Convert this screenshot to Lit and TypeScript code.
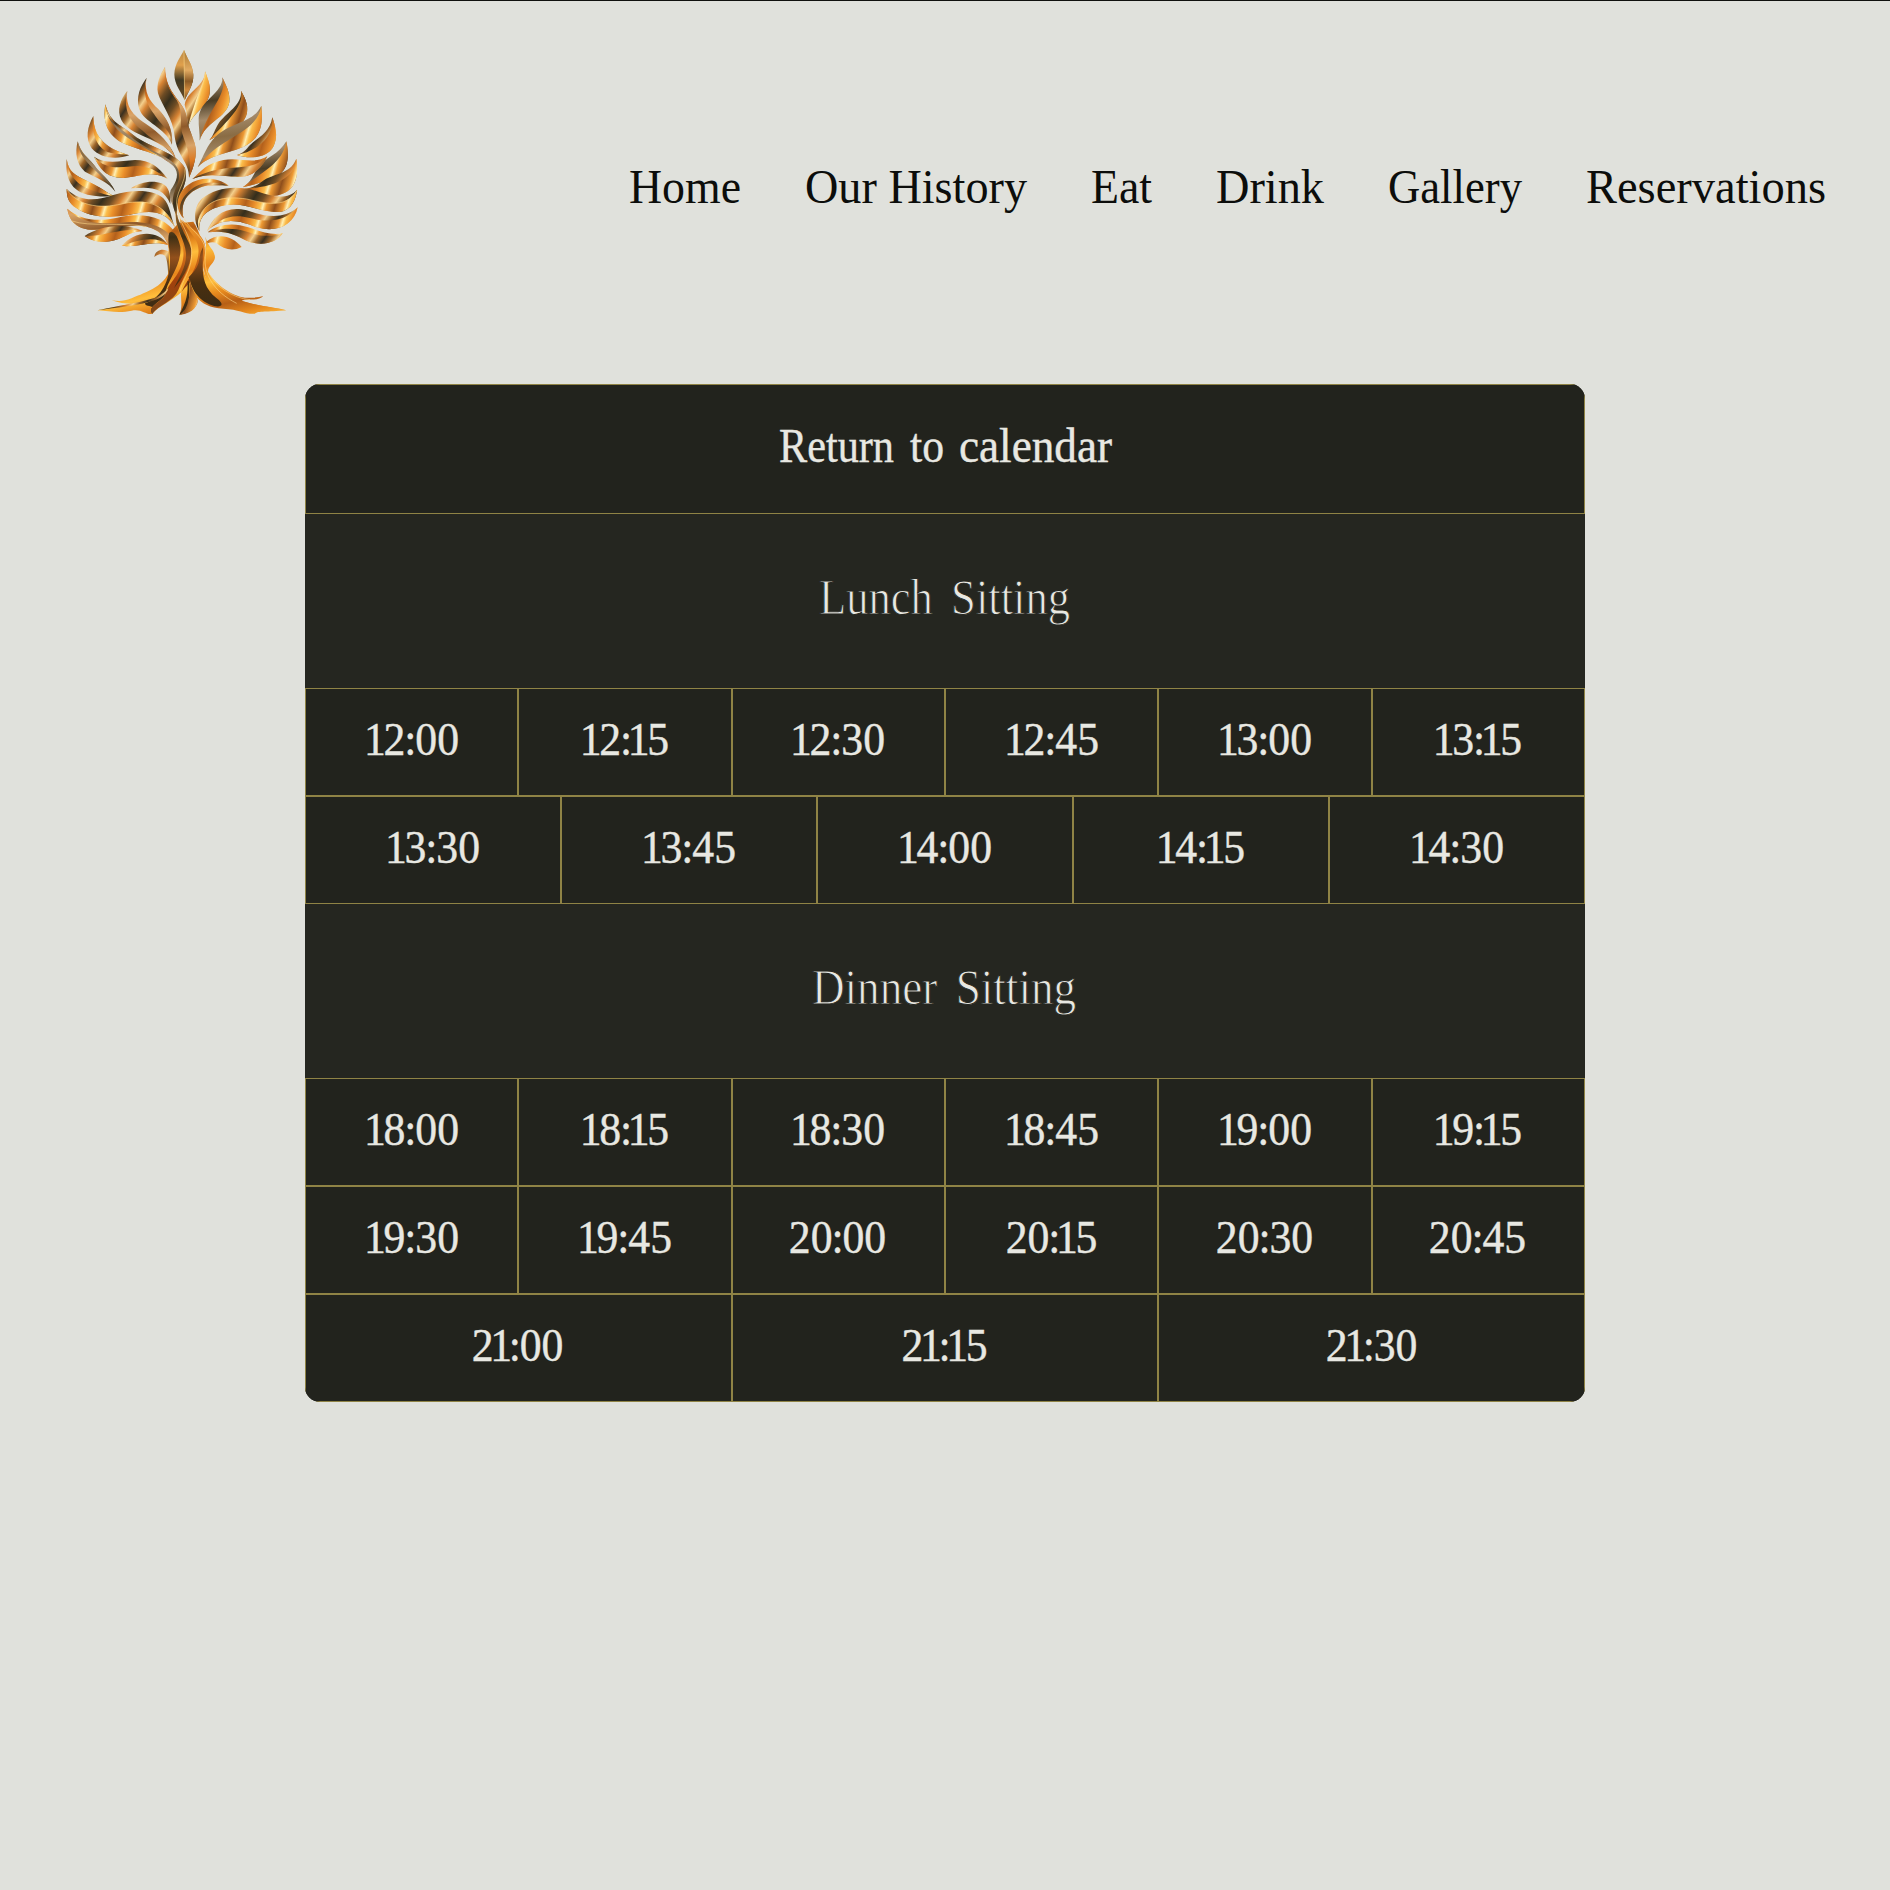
import { LitElement, html, svg, css } from "lit";
import { customElement, property } from "lit/decorators.js";

/** Each leaf, branch or root of the emblem: [gradient name, outline]. */
const TREE: [string, string][] = [
  // crown
  ["d", "M402 30C392 52 374 70 373 103C373 135 394 155 404 181C414 155 431 136 430 104C428 73 411 56 402 30Z"],
  ["a", "M402 30L404 181C414 155 431 136 430 104C428 73 411 56 402 30Z"],
  ["b", "M345 80C330 105 318 130 324 160C334 195 370 235 374 290C382 350 418 365 417 413C430 385 444 345 434 310C424 275 412 260 411 234C404 180 345 165 345 80Z"],
  ["h", "M345 80C340 125 362 155 380 180C402 215 385 255 400 290C412 325 425 350 417 413C430 385 444 345 434 310C424 275 412 260 411 234C404 180 345 165 345 80Z"],
  ["b", "M465 94C466 140 412 150 404 194C410 215 412 240 414 262C428 215 472 205 479 160C482 133 473 115 465 94Z"],
  ["c", "M465 94C462 135 432 180 414 262C428 215 472 205 479 160C482 133 473 115 465 94Z"],
  ["t", "M517 112C520 160 448 180 446 235C445 260 450 280 449 302C465 245 530 235 538 187C541 158 528 136 517 112Z"],
  ["c", "M517 112C535 165 470 210 449 302C465 245 530 235 538 187C541 158 528 136 517 112Z"],
  ["b", "M573 152C578 195 525 220 506 250C494 268 492 285 478 301C520 272 580 270 591 218C595 190 584 173 573 152Z"],
  ["c", "M573 152C586 205 510 260 478 301C520 272 580 270 591 218C595 190 584 173 573 152Z"],
  ["t", "M634 197C610 250 540 245 495 292C472 315 462 345 443 382C500 320 622 352 635 245C637 226 635 213 634 197Z"],
  ["c", "M634 197C620 285 510 285 443 382C500 320 622 352 635 245C637 226 635 213 634 197Z"],
  ["b", "M667 232C660 280 620 295 600 315C588 328 580 340 561 345C590 355 650 360 671 318C685 288 676 258 667 232Z"],
  ["c", "M667 232C672 295 615 335 561 345C590 355 650 360 671 318C685 288 676 258 667 232Z"],
  ["t", "M709 304C685 345 650 350 625 380C610 405 600 430 578 442C625 428 690 422 708 378C718 350 713 325 709 304Z"],
  ["c", "M709 304C700 370 630 400 578 442C625 428 690 422 708 378C718 350 713 325 709 304Z"],
  ["b", "M739 356C720 405 670 398 635 425C618 438 600 446 583 447C625 465 690 485 727 440C745 414 742 382 739 356Z"],
  ["c", "M739 356C730 430 650 440 583 447C625 465 690 485 727 440C745 414 742 382 739 356Z"],
  ["c", "M652 349C610 375 570 350 520 360C470 370 455 392 427 417C490 392 540 418 590 408C620 400 640 375 652 349Z"],
  ["b", "M652 349C600 405 530 360 427 417C490 392 540 418 590 408C620 400 640 375 652 349Z"],
  // crown, left side
  ["b", "M290 113C270 140 258 170 267 205C282 250 345 260 366 314C370 275 356 245 330 215C300 188 275 165 290 113Z"],
  ["h", "M290 113C280 155 300 185 325 207C350 235 370 265 366 314C365 270 335 260 312 222C292 194 276 165 290 113Z"],
  ["b", "M232 152C210 180 200 210 214 240C240 290 330 290 377 354C362 310 330 290 295 268C260 245 215 215 232 152Z"],
  ["h", "M232 152C225 200 250 225 285 250C330 280 360 310 377 354C345 310 310 305 278 272C245 245 218 220 232 152Z"],
  ["t", "M166 193C158 245 170 285 220 310C275 335 335 340 370 378C390 400 380 425 362 450C352 480 375 500 382 530C372 470 420 440 405 385C380 335 300 325 250 285C215 255 180 250 166 193Z"],
  ["b", "M166 193C170 250 215 265 255 300C300 335 370 350 385 390C395 430 365 450 369 490C370 510 378 525 382 530C372 470 420 440 405 385C380 335 300 325 250 285C215 255 180 250 166 193Z"],
  ["c", "M166 193C158 245 170 285 220 310C275 335 335 340 370 378C330 345 290 330 250 304C200 275 172 245 166 193Z"],
  ["b", "M130 228C112 260 105 295 125 325C150 355 200 360 238 346C205 335 175 325 152 297C135 275 130 252 130 228Z"],
  ["c", "M130 228C122 275 140 335 190 340C205 342 220 343 238 346C205 335 175 325 152 297C135 275 130 252 130 228Z"],
  ["b", "M83 304C74 340 80 375 105 395C140 415 175 425 196 455C180 420 150 400 132 375C112 350 92 340 83 304Z"],
  ["t", "M83 304C85 350 125 380 150 405C170 425 185 440 196 455C180 420 150 400 132 375C112 350 92 340 83 304Z"],
  ["b", "M50 357C46 400 55 440 95 458C125 470 160 470 192 469C160 450 140 435 110 422C75 405 55 395 50 357Z"],
  ["c", "M50 357C52 405 85 435 115 446C145 458 165 463 192 469C160 450 140 435 110 422C75 405 55 395 50 357Z"],
  ["b", "M132 350C170 375 210 362 255 360C300 360 325 380 353 416C305 390 270 410 220 414C165 412 150 385 132 350Z"],
  ["c", "M132 350C180 405 240 370 280 380C310 385 330 400 353 416C305 390 270 410 220 414C165 412 150 385 132 350Z"],
  ["b", "M243 445C270 425 310 420 335 430C358 440 362 465 361 492C340 440 300 440 243 445Z"],
  // middle right
  ["c", "M536 437C505 412 450 408 415 434C375 462 375 508 401 535C388 480 420 450 465 438C495 434 515 437 536 437Z"],
  ["b", "M536 437C475 418 445 430 416 455C388 480 382 510 401 535C388 480 420 450 465 438C495 434 515 437 536 437Z"],
  ["b", "M741 449C715 480 665 470 625 455C570 436 500 438 455 477C432 500 428 540 448 574C445 525 475 505 530 495C580 485 640 520 690 516C725 510 738 478 741 449Z"],
  ["c", "M741 449C705 510 640 488 590 477C525 465 475 475 448 530C440 545 445 565 448 574C445 525 475 505 530 495C580 485 640 520 690 516C725 510 738 478 741 449Z"],
  ["b", "M743 502C700 540 645 530 590 511C530 495 490 525 470 575C520 525 575 545 620 562C680 580 732 555 743 502Z"],
  ["c", "M743 502C690 560 630 540 580 530C530 523 500 545 470 575C520 525 575 545 620 562C680 580 732 555 743 502Z"],
  ["c", "M698 580C650 588 615 565 570 556C530 549 495 560 473 577C530 570 555 585 590 602C630 620 680 610 698 580Z"],
  ["b", "M698 580C640 600 600 575 560 568C520 563 500 570 473 577C530 570 555 585 590 602C630 620 680 610 698 580Z"],
  ["c", "M575 621C550 590 505 575 469 605C460 620 480 600 500 610C520 628 548 635 575 621Z"],
  // middle left
  ["b", "M50 447C95 490 145 480 190 465C250 448 310 448 340 475C360 495 362 530 375 562C345 510 300 512 250 522C190 535 120 535 80 505C55 490 50 470 50 447Z"],
  ["c", "M50 447C95 515 180 500 235 488C310 477 345 500 375 562C345 510 300 512 250 522C190 535 120 535 80 505C55 490 50 470 50 447Z"],
  ["c", "M52 506C95 545 155 545 215 530C280 518 350 530 380 585C388 610 390 640 385 675L358 675C365 620 350 575 290 560C220 545 110 600 66 543C58 530 54 520 52 506Z"],
  ["h", "M52 506C95 555 170 553 225 547C300 540 365 565 380 620L385 675L358 675C365 620 350 575 290 560C220 545 110 600 66 543C58 530 54 520 52 506Z"],
  ["b", "M104 588C145 560 220 545 278 573C235 575 220 598 180 604C150 608 130 605 104 588Z"],
  ["c", "M104 588C160 590 220 560 278 573C235 575 220 598 180 604C150 608 130 605 104 588Z"],
  ["b", "M215 618C250 575 320 565 355 615C305 600 275 622 215 618Z"],
  ["c", "M215 618C265 600 315 585 355 615C305 600 275 622 215 618Z"],
  // trunk and roots
  ["b", "M313 651C315 630 340 622 360 637C375 655 368 680 364 700C348 720 360 675 345 647C334 640 325 642 313 651Z"],
  ["g", "M364 675C350 740 290 755 245 775C220 785 205 784 185 781C215 792 250 795 290 788C350 775 400 730 400 690Z"],
  ["g", "M142 811C205 798 280 790 330 758C370 730 350 640 358 580L385 550L430 545C460 590 465 650 460 690C470 745 540 775 600 790C640 800 680 802 709 811C650 817 625 812 615 821C590 825 570 808 520 806C480 805 455 790 440 772C455 800 410 824 388 824C400 800 390 770 394 757C370 780 325 800 307 821C290 827 275 805 245 812C210 820 180 814 142 811Z"],
  ["k", "M358 578C372 570 384 590 391 620C396 680 350 720 345 765C335 785 290 800 307 821C322 790 285 805 285 790C335 775 360 720 360 660C361 630 350 600 358 578Z"],
  ["e", "M378 510C370 565 405 590 400 650C395 705 355 725 345 765C335 785 290 800 307 821C325 795 370 785 385 750C400 710 425 680 424 630C425 590 385 565 378 510Z"],
  ["k", "M378 510C372 565 405 595 408 640C410 680 388 710 372 745C395 715 425 680 424 630C425 590 385 565 378 510Z"],
  ["g", "M390 535C390 580 432 610 426 655C420 700 395 720 388 760C405 725 460 690 465 635C469 575 410 570 390 535Z"],
  ["e", "M395 538C425 590 455 600 443 655C434 700 410 720 395 755C420 725 465 690 467 630C466 580 420 568 395 538Z"],
  ["k", "M416 712C460 670 440 655 459 622C458 690 450 735 500 775C540 805 490 810 450 775C430 755 425 740 416 712Z"],
  ["k", "M412 724C415 760 410 785 388 824C410 824 420 800 418 724Z"],
  ["c", "M420 720C420 765 418 805 390 824C430 820 448 795 440 770C428 750 424 740 420 720Z"],
  ["g", "M466 590C476 625 492 625 495 652C494 670 475 675 474 695C500 740 560 775 595 773C615 773 628 772 640 768C625 785 590 775 575 782C610 794 650 799 709 811C650 810 595 802 550 790C505 775 466 735 462 690C455 650 475 630 466 590Z"],
  ["b", "M142 811C205 798 260 790 310 775C330 770 345 755 355 745C345 785 270 795 142 811Z"],
];

/** Fine light lines that run along the edges of trunk and leaves. */
const GLINTS: string[] = [
  "M402 32L404 180",
  "M405 385C410 430 370 460 382 505C390 560 430 590 425 650C420 700 396 720 390 755",
  "M402 535C432 585 470 590 466 650C460 700 490 755 560 790",
  "M474 695C495 740 550 775 600 779",
  "M50 449C100 515 180 500 235 488C300 480 345 495 374 560",
  "M66 543C120 562 215 545 290 560",
  "M741 451C705 510 640 488 590 477C520 467 470 480 448 530",
];

/** Horizontal adjustments around the narrow "1" and ":" of a time. */
function kern(text: string): string {
  return [...text]
    .map((ch, i) => {
      const prev = text[i - 1];
      let dx = 0;
      if (i > 0 && ch === "1") dx -= 3.5;
      if (prev === "1") dx -= 2.5;
      if (i > 0 && ch === ":") dx -= 1.2;
      if (prev === ":") dx -= 1.2;
      return dx;
    })
    .join(" ");
}

@customElement("tree-logo")
export class TreeLogo extends LitElement {
  static styles = css`
    :host { display: block; width: 260px; height: 290px; }
    .tree { display: block; width: 260px; height: 290px; }
  `;

  render() {
    return html`<svg class="tree" viewBox="0 0 780 870" role="img" aria-label="Golden tree">
      <defs>
        <linearGradient id="a" gradientUnits="userSpaceOnUse" x1="0" y1="30" x2="0" y2="181">
          <stop offset="0" stop-color="#a8772f"></stop><stop offset=".4" stop-color="#e2ab62"></stop>
          <stop offset=".62" stop-color="#8b5b26"></stop><stop offset=".8" stop-color="#d18a3c"></stop>
          <stop offset="1" stop-color="#6e4a20"></stop>
        </linearGradient>
        <linearGradient id="d" gradientUnits="userSpaceOnUse" x1="0" y1="30" x2="0" y2="181">
          <stop offset="0" stop-color="#b98a48"></stop><stop offset=".3" stop-color="#e0a04c"></stop>
          <stop offset=".6" stop-color="#3f3822"></stop><stop offset="1" stop-color="#6a4c26"></stop>
        </linearGradient>
        <linearGradient id="b" gradientUnits="userSpaceOnUse" x1="20" y1="10" x2="98" y2="62" spreadMethod="reflect">
          <stop offset="0" stop-color="#352e1c"></stop><stop offset=".25" stop-color="#6e4c24"></stop>
          <stop offset=".5" stop-color="#d88434"></stop><stop offset=".66" stop-color="#f4cf8c"></stop>
          <stop offset=".82" stop-color="#9c6428"></stop><stop offset="1" stop-color="#3a3020"></stop>
        </linearGradient>
        <linearGradient id="c" gradientUnits="userSpaceOnUse" x1="0" y1="0" x2="84" y2="24" spreadMethod="reflect">
          <stop offset="0" stop-color="#b3601c"></stop><stop offset=".3" stop-color="#ea8e2a"></stop>
          <stop offset=".5" stop-color="#fbbd4c"></stop><stop offset=".6" stop-color="#fff0b4"></stop>
          <stop offset=".72" stop-color="#ee9a34"></stop><stop offset="1" stop-color="#8e4e1c"></stop>
        </linearGradient>
        <linearGradient id="t" gradientUnits="userSpaceOnUse" x1="0" y1="20" x2="14" y2="130" spreadMethod="reflect">
          <stop offset="0" stop-color="#4a3c24"></stop><stop offset=".5" stop-color="#a58c6c"></stop>
          <stop offset="1" stop-color="#8a6c44"></stop>
        </linearGradient>
        <linearGradient id="h" gradientUnits="userSpaceOnUse" x1="0" y1="60" x2="22" y2="190" spreadMethod="reflect">
          <stop offset="0" stop-color="#8f5a2a"></stop><stop offset=".45" stop-color="#d9a468"></stop>
          <stop offset=".8" stop-color="#dc7820"></stop><stop offset="1" stop-color="#a85618"></stop>
        </linearGradient>
        <linearGradient id="e" gradientUnits="userSpaceOnUse" x1="0" y1="540" x2="0" y2="820">
          <stop offset="0" stop-color="#f09a2c"></stop><stop offset=".35" stop-color="#d9781c"></stop>
          <stop offset=".65" stop-color="#a3400c"></stop><stop offset="1" stop-color="#7e4a1c"></stop>
        </linearGradient>
        <linearGradient id="g" gradientUnits="userSpaceOnUse" x1="0" y1="540" x2="30" y2="660" spreadMethod="reflect">
          <stop offset="0" stop-color="#e8861c"></stop><stop offset=".4" stop-color="#ffbe3c"></stop>
          <stop offset=".7" stop-color="#e6891e"></stop><stop offset="1" stop-color="#b65f16"></stop>
        </linearGradient>
        <linearGradient id="k" gradientUnits="userSpaceOnUse" x1="0" y1="510" x2="10" y2="820">
          <stop offset="0" stop-color="#a8743a"></stop><stop offset=".3" stop-color="#403014"></stop>
          <stop offset=".5" stop-color="#93501c"></stop><stop offset=".75" stop-color="#4a2f10"></stop>
          <stop offset="1" stop-color="#3c2c14"></stop>
        </linearGradient>
      </defs>
      ${TREE.map(([fill, d]) => svg`<path d=${d} fill=${`url(#${fill})`}></path>`)}
      ${GLINTS.map((d) => svg`<path d=${d} fill="none" stroke="#ffd98a" stroke-width="2.5" opacity=".7"></path>`)}
    </svg>`;
  }
}

@customElement("site-header")
export class SiteHeader extends LitElement {
  static styles = css`
    :host { display: block; }
    .bar {
      display: flex; align-items: center; justify-content: space-between;
      border-top: 1px solid #0f100e; padding: 39px 64px 0 50px;
    }
    .nav { display: flex; gap: 64px; }
    .link { display: block; height: 60px; text-decoration: none; }
    .label { display: block; height: 60px; overflow: visible; fill: #0c0d0b; font: 47.5px "Liberation Serif", serif; }
  `;

  private links: [string, number][] = [
    ["Home", 112], ["Our History", 222], ["Eat", 61], ["Drink", 108], ["Gallery", 134], ["Reservations", 240],
  ];

  render() {
    return html`<header class="bar">
      <tree-logo></tree-logo>
      <nav class="nav">
        ${this.links.map(
          ([name, w]) => html`<a class="link" href="#"><svg class="label" width=${w} height="60">
            <text x="0" y="48" textLength=${w} lengthAdjust="spacingAndGlyphs">${name}</text></svg></a>`,
        )}
      </nav>
    </header>`;
  }
}

@customElement("sitting-group")
export class SittingGroup extends LitElement {
  @property() heading = "";
  @property({ type: Number }) span = 0;
  @property({ attribute: false }) rows: string[][] = [];

  static styles = css`
    :host { display: block; }
    .heading { height: 174px; display: flex; justify-content: center; }
    .title { display: block; height: 174px; overflow: visible; fill: #e8e8e2; font: 50px "Liberation Serif", serif; word-spacing: 8px;
      stroke: #252620; stroke-width: 0.9px; }
    .row { display: flex; }
    .slot {
      flex: 1; box-sizing: border-box; height: 108px; margin: 0; padding: 0;
      border: 1px solid #8f8345; background: #22231d; display: flex; justify-content: center;
    }
    .time { display: block; width: 120px; height: 106px; overflow: visible; fill: #e8e8e2; stroke: #e8e8e2; stroke-width: 0.4px;
      font: 47px "Liberation Serif", serif; text-anchor: middle; }
  `;

  render() {
    return html`
      <div class="heading"><svg class="title" width=${this.span} height="174">
        <text x="-1" y="100" textLength=${this.span} lengthAdjust="spacingAndGlyphs">${this.heading}</text></svg></div>
      ${this.rows.map(
        (row) => html`<div class="row">${row.map(
          (t) => html`<button class="slot"><svg class="time"><text transform="translate(59.5 66) scale(.93 1)" dx=${kern(t)}>${t}</text></svg></button>`,
        )}</div>`,
      )}
    `;
  }
}

@customElement("app-root")
export class AppRoot extends LitElement {
  static styles = css`
    :host { display: block; min-height: 1890px; background: #e0e1dc; }
    .main { display: flex; justify-content: center; padding-top: 54px; }
    .panel { width: 1280px; border-radius: 15px; overflow: hidden; background: #252620; }
    .back {
      display: flex; justify-content: center; box-sizing: border-box; width: 100%; height: 130px; margin: 0; padding: 0;
      border: 1px solid #8f8345; background: #22231d;
    }
    .label { display: block; height: 128px; overflow: visible; fill: #e8e8e2; stroke: #e8e8e2; stroke-width: 0.4px;
      font: 48px "Liberation Serif", serif; }
  `;

  private lunch = [
    ["12:00", "12:15", "12:30", "12:45", "13:00", "13:15"],
    ["13:30", "13:45", "14:00", "14:15", "14:30"],
  ];

  private dinner = [
    ["18:00", "18:15", "18:30", "18:45", "19:00", "19:15"],
    ["19:30", "19:45", "20:00", "20:15", "20:30", "20:45"],
    ["21:00", "21:15", "21:30"],
  ];

  render() {
    return html`
      <site-header></site-header>
      <main class="main">
        <section class="panel">
          <button class="back"><svg class="label" width="333" height="128">
            <text y="77"><tspan x="0" textLength="115" lengthAdjust="spacingAndGlyphs">Return</tspan> <tspan x="131" textLength="34" lengthAdjust="spacingAndGlyphs">to</tspan> <tspan x="180" textLength="153" lengthAdjust="spacingAndGlyphs">calendar</tspan></text></svg></button>
          <sitting-group heading="Lunch Sitting" span="251" .rows=${this.lunch}></sitting-group>
          <sitting-group heading="Dinner Sitting" span="264" .rows=${this.dinner}></sitting-group>
        </section>
      </main>
    `;
  }
}
